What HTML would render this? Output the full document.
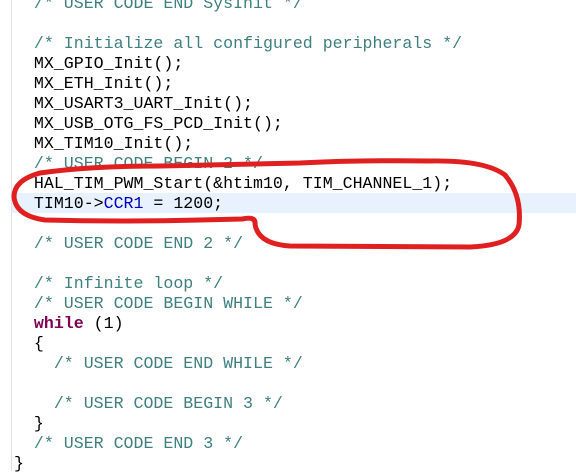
<!DOCTYPE html>
<html><head><meta charset="utf-8"><style>
body{margin:0;width:576px;height:471px;overflow:hidden;background:#fff;position:relative;font-family:"Liberation Mono",monospace;}
.l{position:absolute;left:14px;height:20px;line-height:20px;font-size:16.6px;white-space:pre;color:#000;margin-top:1px}
.c{color:#3f7f7f}.k{color:#7f0055;font-weight:bold}.f{color:#0000c0}
#hl{position:absolute;left:12px;top:193px;width:564px;height:20px;background:#e8f2fe}
#g{position:absolute;left:11px;top:0;width:1px;height:471px;background:#e4e4e4}
</style></head><body>
<div id="hl"></div><div id="g"></div>
<div class="l c" style="top:-7px">  /* USER CODE END SysInit */</div>
<div class="l c" style="top:33px">  /* Initialize all configured peripherals */</div>
<div class="l" style="top:53px">  MX_GPIO_Init();</div>
<div class="l" style="top:73px">  MX_ETH_Init();</div>
<div class="l" style="top:93px">  MX_USART3_UART_Init();</div>
<div class="l" style="top:113px">  MX_USB_OTG_FS_PCD_Init();</div>
<div class="l" style="top:133px">  MX_TIM10_Init();</div>
<div class="l c" style="top:153px">  /* USER CODE BEGIN 2 */</div>
<div class="l" style="top:173px">  HAL_TIM_PWM_Start(&amp;htim10, TIM_CHANNEL_1);</div>
<div class="l" style="top:193px">  TIM10-&gt;<span class="f">CCR1</span> = 1200;</div>
<div class="l c" style="top:233px">  /* USER CODE END 2 */</div>
<div class="l c" style="top:273px">  /* Infinite loop */</div>
<div class="l c" style="top:293px">  /* USER CODE BEGIN WHILE */</div>
<div class="l" style="top:313px">  <span class="k">while</span> (1)</div>
<div class="l" style="top:333px">  {</div>
<div class="l c" style="top:353px">    /* USER CODE END WHILE */</div>
<div class="l c" style="top:393px">    /* USER CODE BEGIN 3 */</div>
<div class="l" style="top:413px">  }</div>
<div class="l c" style="top:433px">  /* USER CODE END 3 */</div>
<div class="l" style="top:453px">}</div>
<svg style="position:absolute;left:0;top:0" width="576" height="471">
<path d="M242,219 Q256,216 255,224 Q258,244 290,246 L470,247 Q515,245 519,225 Q522,195 505,175 Q485,160 430,161 Q360,160 300,163 L160,166 Q90,166 40,173 Q14,180 14,197 Q16,216 45,220 Q120,222 200,220 Z" fill="none" stroke="#e02020" stroke-width="5" stroke-linejoin="round"/>
</svg>
</body></html>
